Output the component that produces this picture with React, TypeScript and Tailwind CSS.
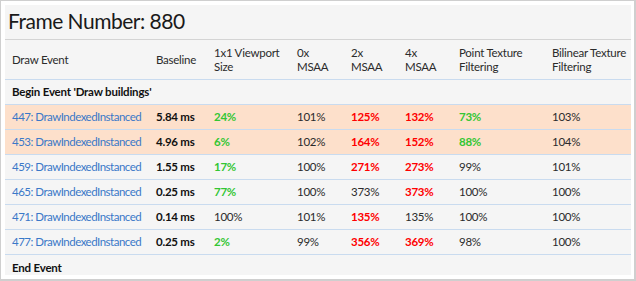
import React from "react";

type Cell = { t: string; c?: "r" | "g" | "b" | "n" };
type Row = { ev: string; hl?: boolean; cells: Cell[] };

const rows: Row[] = [
  { ev: "447: DrawIndexedInstanced", hl: true, cells: [{ t: "5.84 ms", c: "b" }, { t: "24%", c: "g" }, { t: "101%" }, { t: "125%", c: "r" }, { t: "132%", c: "r" }, { t: "73%", c: "g" }, { t: "103%" }] },
  { ev: "453: DrawIndexedInstanced", hl: true, cells: [{ t: "4.96 ms", c: "b" }, { t: "6%", c: "g" }, { t: "102%" }, { t: "164%", c: "r" }, { t: "152%", c: "r" }, { t: "88%", c: "g" }, { t: "104%" }] },
  { ev: "459: DrawIndexedInstanced", cells: [{ t: "1.55 ms", c: "b" }, { t: "17%", c: "g" }, { t: "100%" }, { t: "271%", c: "r" }, { t: "273%", c: "r" }, { t: "99%" }, { t: "101%" }] },
  { ev: "465: DrawIndexedInstanced", cells: [{ t: "0.25 ms", c: "b" }, { t: "77%", c: "g" }, { t: "100%" }, { t: "373%" }, { t: "373%", c: "r" }, { t: "100%" }, { t: "100%" }] },
  { ev: "471: DrawIndexedInstanced", cells: [{ t: "0.14 ms", c: "b" }, { t: "100%" }, { t: "101%" }, { t: "135%", c: "r" }, { t: "135%" }, { t: "100%" }, { t: "100%" }] },
  { ev: "477: DrawIndexedInstanced", cells: [{ t: "0.25 ms", c: "b" }, { t: "2%", c: "g" }, { t: "99%" }, { t: "356%", c: "r" }, { t: "369%", c: "r" }, { t: "98%" }, { t: "100%" }] },
];

const cols = "grid grid-cols-[144px_58px_83px_54px_54px_54px_93px_86px]";

function cls(c?: string) {
  if (c === "r") return "font-bold text-[#ff0000]";
  if (c === "g") return "font-bold text-[#33c633]";
  if (c === "b") return "font-bold text-[#111111]";
  return "text-[#2b2b2b]";
}

export default function App() {
  return (
    <div
      className="w-[636px] h-[281px] bg-white border-l border-t border-r-2 border-b-2 border-[#cfcfcf] pt-[4px] pl-[4px] pr-[3px] pb-[4px] overflow-hidden"
      style={{ fontFamily: 'Lato, "Noto Sans", sans-serif' }}
    >
      <div className="w-[626px] h-[270px] bg-[#f5f5f5] overflow-hidden">
        <div className="h-[34px] pl-[3px] text-[21px] tracking-[-0.5px] leading-[30px] text-[#1a1a1a] pt-[1px]">Frame Number: 880</div>
        <div className={`${cols} h-[41px] border-t border-b border-t-[#d4d4d4] border-b-[#c9dbef] items-center text-[11.5px] tracking-[-0.25px] leading-[14px] text-[#2b2b2b]`}>
          <div className="pl-[7px]">Draw Event</div>
          <div className="pl-[7px]">Baseline</div>
          <div className="pl-[7px]">1x1 Viewport<br />Size</div>
          <div className="pl-[7px]">0x<br />MSAA</div>
          <div className="pl-[7px]">2x<br />MSAA</div>
          <div className="pl-[7px]">4x<br />MSAA</div>
          <div className="pl-[7px]">Point Texture<br />Filtering</div>
          <div className="pl-[7px] whitespace-nowrap">Bilinear Texture<br />Filtering</div>
        </div>
        <div className="h-[25px] border-b border-[#c9dbef] flex items-center pl-[7px] text-[11.5px] tracking-[-0.2px] font-bold text-[#111111]">Begin Event 'Draw buildings'</div>
        {rows.map((r) => (
          <div key={r.ev} className={`${cols} h-[25px] border-b border-[#c9dbef] items-center text-[11.5px] tracking-[-0.25px] ${r.hl ? "bg-[#fde0cb]" : ""}`}>
            <div className="pl-[7px] text-[#3a78c8] whitespace-nowrap tracking-[-0.5px]">{r.ev}</div>
            {r.cells.map((c, i) => (
              <div key={i} className={`pl-[7px] whitespace-nowrap ${cls(c.c)}`}>{c.t}</div>
            ))}
          </div>
        ))}
        <div className="h-[25px] flex items-center pl-[7px] text-[11.5px] tracking-[-0.2px] font-bold text-[#111111]">End Event</div>
      </div>
    </div>
  );
}
